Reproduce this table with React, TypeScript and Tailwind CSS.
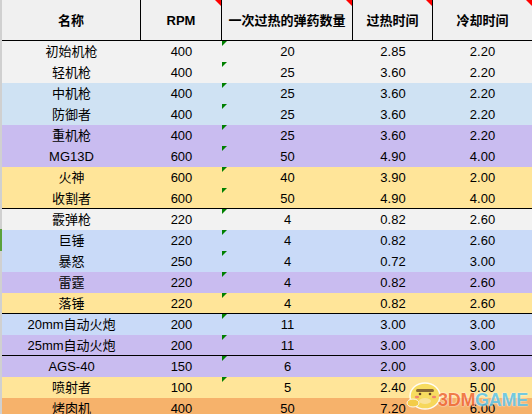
import React from "react";

type Row = {
  name: string;
  rpm: string;
  ammo: string;
  heat: string;
  cool: string;
  bg: string;
  line?: boolean;
  tri?: boolean;
};

const GRAY = "bg-[#f2f2f2]";
const BLUE1 = "bg-[#cfe2f3]";
const BLUE2 = "bg-[#c9daf8]";
const PURPLE = "bg-[#c9bcf0]";
const YELLOW = "bg-[#ffe599]";
const ORANGE = "bg-[#f6b26b]";

const rows: Row[] = [
  { name: "初始机枪", rpm: "400", ammo: "20", heat: "2.85", cool: "2.20", bg: GRAY, tri: true },
  { name: "轻机枪", rpm: "400", ammo: "25", heat: "3.60", cool: "2.20", bg: GRAY, tri: true },
  { name: "中机枪", rpm: "400", ammo: "25", heat: "3.60", cool: "2.20", bg: BLUE1, tri: true },
  { name: "防御者", rpm: "400", ammo: "25", heat: "3.60", cool: "2.20", bg: BLUE1, tri: true },
  { name: "重机枪", rpm: "400", ammo: "25", heat: "3.60", cool: "2.20", bg: PURPLE, tri: true },
  { name: "MG13D", rpm: "600", ammo: "50", heat: "4.90", cool: "4.00", bg: PURPLE, tri: true },
  { name: "火神", rpm: "600", ammo: "40", heat: "3.90", cool: "2.00", bg: YELLOW, tri: true },
  { name: "收割者", rpm: "600", ammo: "50", heat: "4.90", cool: "4.00", bg: YELLOW, tri: true, line: true },
  { name: "霰弹枪", rpm: "220", ammo: "4", heat: "0.82", cool: "2.60", bg: GRAY, tri: true },
  { name: "巨锤", rpm: "220", ammo: "4", heat: "0.82", cool: "2.60", bg: BLUE2, tri: true },
  { name: "暴怒", rpm: "250", ammo: "4", heat: "0.72", cool: "3.00", bg: BLUE2, tri: true },
  { name: "雷霆", rpm: "220", ammo: "4", heat: "0.82", cool: "2.60", bg: PURPLE, tri: true },
  { name: "落锤", rpm: "220", ammo: "4", heat: "0.82", cool: "2.60", bg: YELLOW, tri: true, line: true },
  { name: "20mm自动火炮", rpm: "200", ammo: "11", heat: "3.00", cool: "3.00", bg: BLUE2, tri: true },
  { name: "25mm自动火炮", rpm: "200", ammo: "11", heat: "3.00", cool: "3.00", bg: PURPLE, tri: true, line: true },
  { name: "AGS-40", rpm: "150", ammo: "6", heat: "2.00", cool: "3.00", bg: PURPLE, tri: true },
  { name: "喷射者", rpm: "100", ammo: "5", heat: "2.40", cool: "5.00", bg: YELLOW, tri: true },
  { name: "烤肉机", rpm: "400", ammo: "50", heat: "7.20", cool: "6.00", bg: ORANGE },
];

const font = {
  fontFamily: '"Liberation Sans", "Noto Sans CJK SC", Arial, sans-serif',
};

function RedTri() {
  return (
    <svg className="absolute top-0 right-0" width="6" height="6" viewBox="0 0 6 6">
      <polygon points="0,0 6,0 6,6" fill="#ff0000" />
    </svg>
  );
}

function GreenTri() {
  return (
    <svg className="absolute top-0 left-0" width="5" height="5" viewBox="0 0 5 5">
      <polygon points="0,0 5,0 0,5" fill="#008000" />
    </svg>
  );
}

export default function App() {
  return (
    <div
      className="relative w-[532px] h-[414px] overflow-hidden bg-white text-[13px] text-black"
      style={font}
    >
      <div className="flex">
        {/* row-header strip */}
        <div className="w-[2px] shrink-0 flex flex-col bg-[#d0d0d0]">
          <div className="h-[229px]" />
          <div className="h-[22px] bg-[#5aa13c]" />
        </div>
        <div className="flex-1 flex flex-col">
          {/* header */}
          <div className="flex h-[41px] bg-[#f0f0f0] border-b border-black font-bold leading-none">
            <div className="w-[139px] border-r border-black flex items-center justify-center">
              名称
            </div>
            <div className="relative w-[81px] border-r border-black flex items-center justify-center">
              RPM
              <RedTri />
            </div>
            <div className="relative w-[131px] border-r border-black flex items-center justify-center">
              一次过热的弹药数量
              <RedTri />
            </div>
            <div className="relative w-[80px] border-r border-black flex items-center justify-center">
              过热时间
              <RedTri />
            </div>
            <div className="relative flex-1 flex items-center justify-center">
              冷却时间
              <RedTri />
            </div>
          </div>
          {/* body */}
          {rows.map((r, i) => (
            <div
              key={i}
              className={`flex h-[21px] shrink-0 leading-none ${r.bg} ${r.line ? "border-b border-black" : ""}`}
            >
              <div className="w-[139px] flex items-center justify-center">{r.name}</div>
              <div className="w-[81px] flex items-center justify-center">{r.rpm}</div>
              <div className="relative w-[131px] flex items-center justify-center">
                {r.tri && <GreenTri />}
                {r.ammo}
              </div>
              <div className="w-[80px] flex items-center justify-center">{r.heat}</div>
              <div className="flex-1 flex items-center justify-center">{r.cool}</div>
            </div>
          ))}
        </div>
      </div>

      {/* watermark */}
      <svg
        className="absolute left-[405px] top-[378px] opacity-90"
        width="38"
        height="34"
        viewBox="0 0 38 34"
      >
        <ellipse cx="20" cy="18" rx="15" ry="13" fill="#f7dc5a" stroke="#fff" strokeWidth="1.5" />
        <ellipse cx="8" cy="25" rx="6" ry="4" fill="#f3cf45" stroke="#fff" strokeWidth="1" />
        <rect x="11" y="11" width="18" height="3" rx="1.5" fill="#7a5a2a" />
        <circle cx="15" cy="16" r="1.3" fill="#5a3a1a" />
        <circle cx="25" cy="16" r="1.3" fill="#5a3a1a" />
        <ellipse cx="12" cy="19" rx="2.2" ry="1.3" fill="#f07a6a" />
        <ellipse cx="29" cy="19" rx="2.2" ry="1.3" fill="#f07a6a" />
        <ellipse cx="20" cy="23" rx="6" ry="3" fill="#fbe9a0" />
      </svg>
      <div
        className="absolute left-[438px] top-[391px] text-[18px] font-bold leading-none tracking-[-0.3px] opacity-85 whitespace-nowrap"
        style={{
          fontFamily: '"Liberation Sans", Arial, sans-serif',
          textShadow: "0 0 1px #fff, 0 0 2px #fff",
        }}
      >
        <span className="text-[#ef6a3a]">3DM</span>
        <span className="text-[#5ec6ea]">GAME</span>
      </div>
    </div>
  );
}
